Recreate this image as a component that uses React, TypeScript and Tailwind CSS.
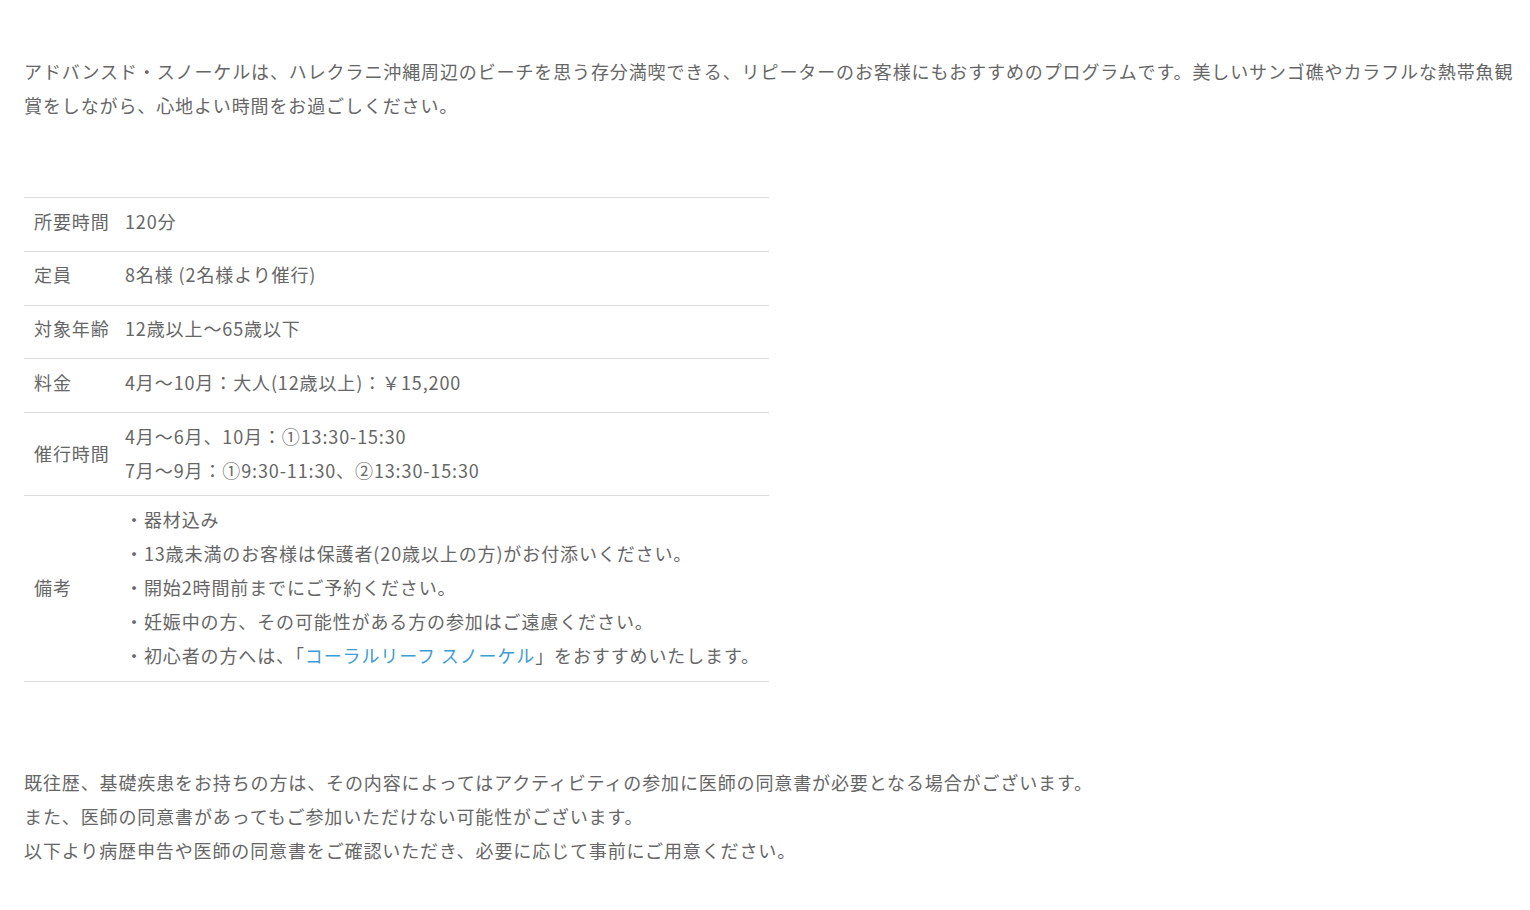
import React from "react";

const rows: { label: string; lines: React.ReactNode[] }[] = [
  { label: "所要時間", lines: ["120分"] },
  { label: "定員", lines: ["8名様 (2名様より催行)"] },
  { label: "対象年齢", lines: ["12歳以上〜65歳以下"] },
  { label: "料金", lines: ["4月〜10月：大人(12歳以上)：￥15,200"] },
  {
    label: "催行時間",
    lines: ["4月〜6月、10月：①13:30-15:30", "7月〜9月：①9:30-11:30、②13:30-15:30"],
  },
  {
    label: "備考",
    lines: [
      "・器材込み",
      "・13歳未満のお客様は保護者(20歳以上の方)がお付添いください。",
      "・開始2時間前までにご予約ください。",
      "・妊娠中の方、その可能性がある方の参加はご遠慮ください。",
      <>
        ・初心者の方へは、「<a className="text-[#3e9dd3]">コーラルリーフ スノーケル</a>」をおすすめいたします。
      </>,
    ],
  },
];

export default function App() {
  return (
    <div
      className="min-h-[910px] w-[1530px] bg-white pl-6 pr-[8px] pt-[54px] text-[18px] leading-[34px] tracking-[0.88px] text-[#666666]"
      style={{ fontFamily: '"Noto Sans CJK JP", "Noto Sans", sans-serif' }}
    >
      <p>
        アドバンスド・スノーケルは、ハレクラニ沖縄周辺のビーチを思う存分満喫できる、リピーターのお客様にもおすすめのプログラムです。美しいサンゴ礁やカラフルな熱帯魚観賞をしながら、心地よい時間をお過ごしください。
      </p>

      <div className="mt-[75px] w-[745px] border-t border-[#dddddd]">
        {rows.map((r) => (
          <div
            key={r.label}
            className={
              r.lines.length > 1
                ? "flex border-b border-[#dddddd] pt-[5.5px] pb-[8.75px]"
                : "flex border-b border-[#dddddd] pt-[5.5px] pb-[13.25px]"
            }
          >
            <div className="w-[101px] shrink-0 self-center pl-[10px]">{r.label}</div>
            <div className="flex flex-col">
              {r.lines.map((l, i) => (
                <div key={i} className="whitespace-nowrap">
                  {l}
                </div>
              ))}
            </div>
          </div>
        ))}
      </div>

      <div className="mt-[83px]">
        <p>既往歴、基礎疾患をお持ちの方は、その内容によってはアクティビティの参加に医師の同意書が必要となる場合がございます。</p>
        <p>また、医師の同意書があってもご参加いただけない可能性がございます。</p>
        <p>以下より病歴申告や医師の同意書をご確認いただき、必要に応じて事前にご用意ください。</p>
      </div>
    </div>
  );
}
